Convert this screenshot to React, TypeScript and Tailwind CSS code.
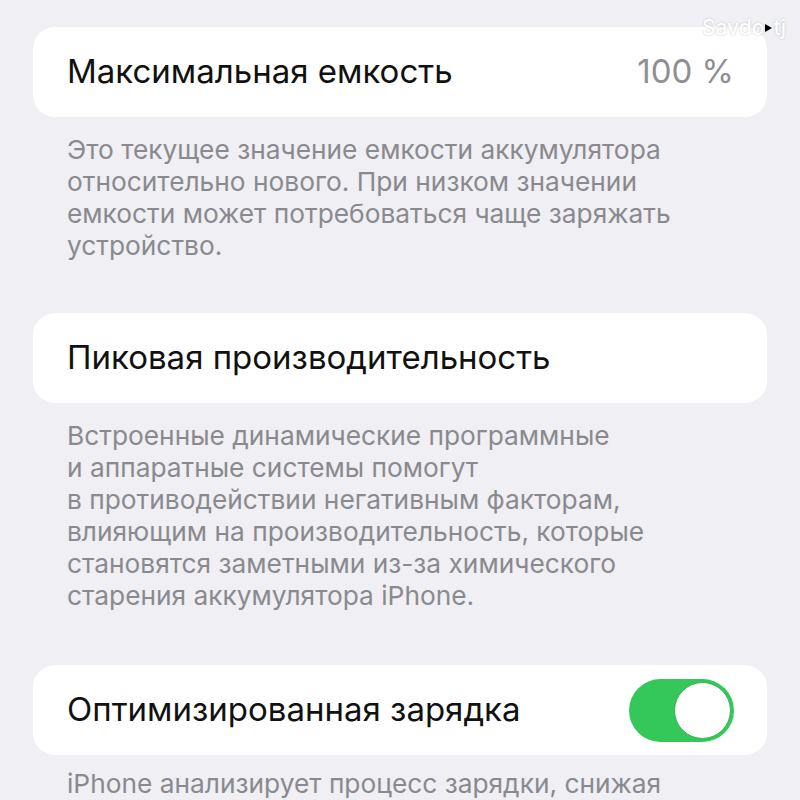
const Card = ({ children }: { children: React.ReactNode }) => (
  <div className="mx-[33px] flex h-[90px] items-center justify-between rounded-[22px] bg-white pl-[34px] pr-[33px]">
    {children}
  </div>
);

const Note = ({ lines, last }: { lines: string[]; last: string }) => (
  <div className={`px-[67px] pt-[17px] text-[26.3px] leading-[32px] text-[#8a8a8e] ${last}`}>
    {lines.map((l) => (
      <div key={l}>{l}</div>
    ))}
  </div>
);

const Toggle = () => (
  <div className="flex h-[63px] w-[105px] items-center justify-end rounded-full bg-[#34c759] p-[3px]">
    <div className="h-[57px] w-[57px] rounded-full border border-[#2fb850] bg-white" />
  </div>
);

export default function App() {
  return (
    <div
      className="relative h-[800px] w-[800px] overflow-hidden bg-[#efeff4] pt-[27px] text-[#111]"
      style={{ fontFamily: "Inter, 'Noto Sans', sans-serif" }}
    >
      {/* watermark */}
      <div className="absolute top-[12px] right-[14px] flex items-center text-[21px] font-medium text-white [text-shadow:0_0_2px_rgba(0,0,0,0.25)]">
        <span>Savdo</span>
        <span className="mx-[1px] h-0 w-0 border-y-[4px] border-l-[7px] border-y-transparent border-l-black" />
        <span>tj</span>
      </div>

      <Card>
        <span className="text-[33px]">Максимальная емкость</span>
        <span className="text-[33px] text-[#8e8e93]">100 %</span>
      </Card>
      <Note
        last="pb-[51px]"
        lines={[
          "Это текущее значение емкости аккумулятора",
          "относительно нового. При низком значении",
          "емкости может потребоваться чаще заряжать",
          "устройство.",
        ]}
      />

      <Card>
        <span className="text-[33px]">Пиковая производительность</span>
      </Card>
      <Note
        last="pb-[53px]"
        lines={[
          "Встроенные динамические программные",
          "и аппаратные системы помогут",
          "в противодействии негативным факторам,",
          "влияющим на производительность, которые",
          "становятся заметными из-за химического",
          "старения аккумулятора iPhone.",
        ]}
      />

      <Card>
        <span className="text-[33px]">Оптимизированная зарядка</span>
        <Toggle />
      </Card>
      <div className="px-[67px] pt-[13px] text-[26.3px] leading-[32px] text-[#8a8a8e]">
        iPhone анализирует процесс зарядки, снижая
      </div>
    </div>
  );
}
